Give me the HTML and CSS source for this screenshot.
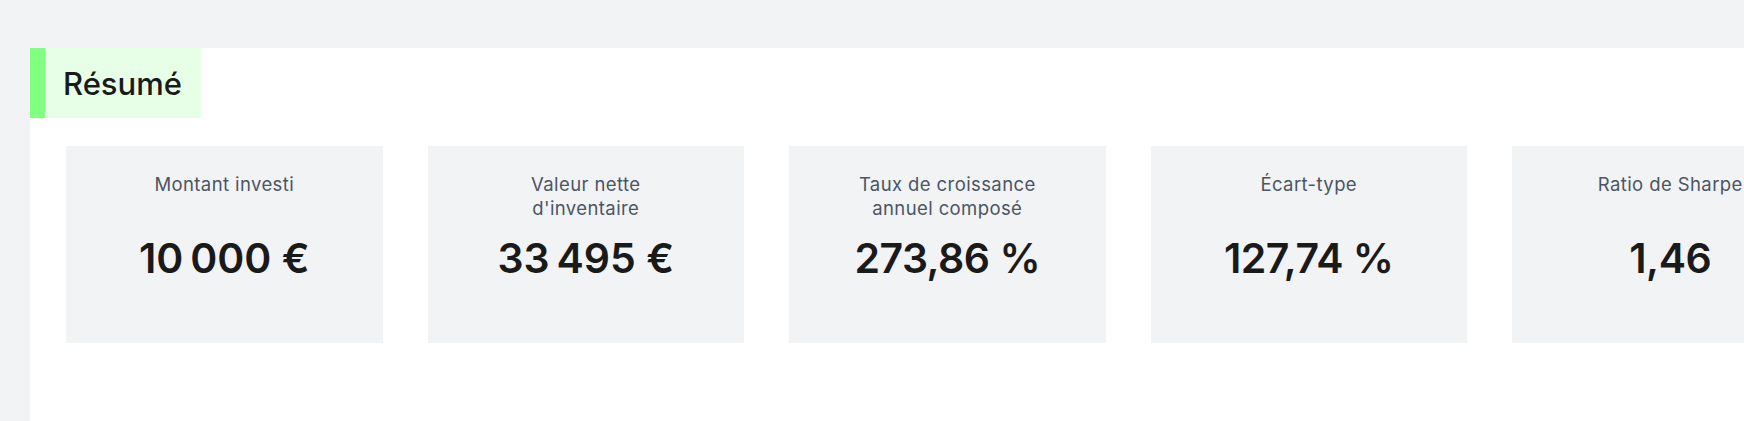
FILE: index.html
```html
<!DOCTYPE html>
<html lang="fr">
<head>
<meta charset="utf-8">
<title>Résumé</title>
<link rel="stylesheet" href="styles.css">
</head>
<body>
<main class="page">
  <section class="panel">
    <header class="panel-head">
      <h2 class="panel-title">Résumé</h2>
    </header>
    <div class="cards">
      <div class="card">
        <div class="card-label">Montant investi</div>
        <div class="card-value">10&#8239;000 €</div>
      </div>
      <div class="card">
        <div class="card-label">Valeur nette<br>d'inventaire</div>
        <div class="card-value">33&#8239;495 €</div>
      </div>
      <div class="card">
        <div class="card-label">Taux de croissance<br>annuel composé</div>
        <div class="card-value">273,86 %</div>
      </div>
      <div class="card">
        <div class="card-label">Écart-type</div>
        <div class="card-value">127,74 %</div>
      </div>
      <div class="card">
        <div class="card-label">Ratio de Sharpe</div>
        <div class="card-value">1,46</div>
      </div>
    </div>
  </section>
</main>
</body>
</html>
```

FILE: styles.css
```css
html, body {
  margin: 0;
  padding: 0;
  background: #f2f3f5;
  overflow: hidden;
  font-family: Inter, "Liberation Sans", sans-serif;
}

.page {
  padding: 48px 0 0 30px;
  min-height: 100vh;
  box-sizing: border-box;
}

.panel {
  background: #ffffff;
  width: 1834px;
  min-height: 373px;
}

.panel-head {
  display: inline-flex;
  align-items: center;
  height: 70px;
  background: #e6ffe6;
  border-left: 15px solid #80ff80;
  padding: 0 19px 0 18px;
}

.panel-title {
  margin: 0;
  font-size: 31px;
  font-weight: 500;
  color: #1a1a1a;
  letter-spacing: 0;
}

.cards {
  display: flex;
  gap: 45px;
  padding: 28px 0 0 36px;
}

.card {
  flex: 0 0 316.5px;
  height: 197px;
  background: #f2f3f5;
  box-sizing: border-box;
  padding-top: 26px;
  text-align: center;
}

.card-label {
  font-size: 18.5px;
  line-height: 24px;
  height: 48px;
  color: #4a5565;
  letter-spacing: 0.4px;
}

.card-value {
  margin-top: 13px;
  font-size: 41px;
  line-height: 50px;
  font-weight: 600;
  color: #1a1a1a;
  letter-spacing: -0.5px;
}
```
